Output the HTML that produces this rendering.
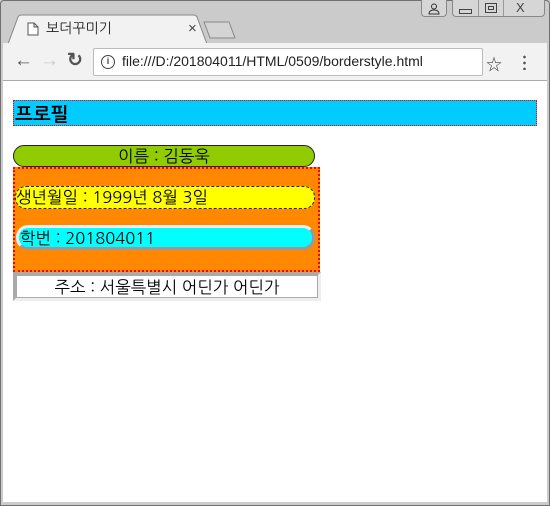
<!DOCTYPE html><html><head><meta charset="utf-8"><style>
*{margin:0;padding:0;box-sizing:border-box}
body{width:550px;height:506px;background:#cbcbcb;font-family:"Liberation Sans","Noto Sans CJK KR","NanumGothic",sans-serif;position:relative;overflow:hidden}
.frame{position:absolute;left:0;top:0;width:550px;height:506px;border:1px solid #707070;border-radius:4px 4px 0 0}
.abs{position:absolute}
.k{font-family:"NanumGothic","Noto Sans CJK KR",sans-serif;white-space:nowrap}
</style></head><body>
<div class="frame"></div>
<div class="abs" style="left:421px;top:0;width:26px;height:17px;border:1px solid #888;border-top:none;border-radius:0 0 4px 4px;background:#d6d6d6"></div>
<svg class="abs" style="left:427px;top:2px" width="14" height="13"><circle cx="7" cy="4.5" r="2.5" fill="none" stroke="#333"/><path d="M2 12 Q2 8 7 8 Q12 8 12 12 Z" fill="none" stroke="#333"/></svg>
<div class="abs" style="left:452px;top:0;width:93px;height:17px;border:1px solid #888;border-top:none;border-radius:0 0 4px 4px;background:#d6d6d6"></div>
<div class="abs" style="left:478px;top:0;width:1px;height:16px;background:#999"></div>
<div class="abs" style="left:503px;top:0;width:1px;height:16px;background:#999"></div>
<div class="abs" style="left:459px;top:9px;width:13px;height:5px;border:1px solid #444"></div>
<div class="abs" style="left:485px;top:3px;width:12px;height:10px;border:1px solid #444"></div>
<div class="abs" style="left:488px;top:6px;width:6px;height:4px;border:1px solid #444"></div>
<div class="abs" style="left:516px;top:0px;font-size:13px;color:#444">X</div>
<svg class="abs" style="left:0;top:14px" width="260" height="30"><path d="M8 30 L18 3 Q19 1 22 1 L193 1 Q196 1 197 3 L207 30" fill="#f2f2f2" stroke="#888"/><path d="M204 8 L229 8 L235 24 L210 24 Z" fill="#d4d4d4" stroke="#888"/></svg>
<svg class="abs" style="left:27px;top:22px" width="12" height="14"><path d="M1 1 H7 L11 5 V13 H1 Z M7 1 V5 H11" fill="#fff" stroke="#555"/></svg>
<div class="abs k" style="left:46px;top:20px;font-size:14px;color:#222">보더꾸미기</div>
<div class="abs" style="left:188px;top:20px;font-size:15px;color:#444">×</div>
<div class="abs" style="left:3px;top:43px;width:544px;height:38px;background:#f2f2f2;border-bottom:1px solid #aaa"></div>
<div class="abs" style="left:14px;top:50px;font-size:19px;color:#555">&#8592;</div>
<div class="abs" style="left:40px;top:50px;font-size:19px;color:#ccc">&#8594;</div>
<div class="abs" style="left:67px;top:49px;font-size:19px;color:#555;font-weight:bold">&#8635;</div>
<div class="abs" style="left:93px;top:48px;width:390px;height:28px;background:#fff;border:1px solid #bbb;border-radius:2px"></div>
<div class="abs" style="left:101px;top:55px;width:14px;height:14px;border:1.5px solid #444;border-radius:50%;font-size:9px;text-align:center;line-height:11px;font-weight:bold;color:#444">i</div>
<div class="abs" style="left:122px;top:53px;font-size:14px;color:#222">file:///D:/201804011/HTML/0509/borderstyle.html</div>
<div class="abs" style="left:486px;top:51px;font-size:16px;color:#444">&#9734;</div>
<div class="abs" style="left:523px;top:54px;width:3px;height:16px;background:radial-gradient(circle,#555 1.2px,transparent 1.5px) 0 0/3px 6px"></div>
<div class="abs k" style="left:3px;top:81px;width:544px;height:421px;background:#fff">
<div class="abs" style="left:10px;top:19px;width:524px;height:26px;background:#00ccff;border:1px dotted red;font-weight:bold;font-size:19px;line-height:27px;padding-left:1px">프로필</div>
<div class="abs" style="left:10px;top:64px;width:302px;height:22px;background:#90cc00;border:1px solid #222;border-radius:11px;text-align:center;font-size:16.5px;line-height:23px">이름 : 김동욱</div>
<div class="abs" style="left:10px;top:86px;width:307px;height:105px;background:#ff8800;border:2px dotted red"></div>
<div class="abs" style="left:12px;top:105px;width:300px;height:23px;background:#ffff00;border:1px dashed #222;border-radius:11px;font-size:16.5px;line-height:23px">생년월일 : 1999년 8월 3일</div>
<div class="abs" style="left:13px;top:144px;width:299px;height:25px;background:#00ffff;border:3px solid;border-color:#eee #999 #999 #eee;border-radius:12px;font-size:16.5px;line-height:22px;padding-left:1px">학번 : 201804011</div>
<div class="abs" style="left:10px;top:191px;width:308px;height:29px;background:#fff;border:3px solid;border-color:#aaa #eee #eee #aaa;outline:1px solid #aaa;outline-offset:-4px;text-align:center;font-size:16.5px;line-height:26px">주소 : 서울특별시 어딘가 어딘가</div>
</div>
</body></html>
